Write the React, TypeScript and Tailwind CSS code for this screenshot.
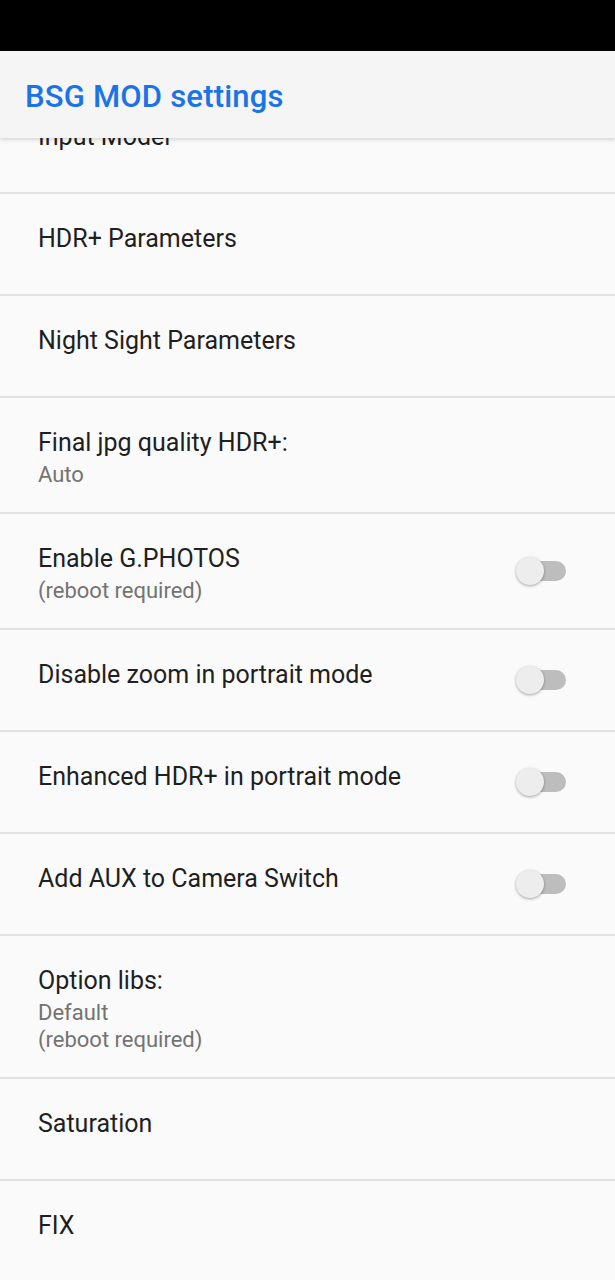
import type { ReactNode } from 'react'

type Pref = {
  title: string
  summary?: string[]
  toggle?: boolean
}

const prefs: Pref[] = [
  { title: 'Input Model' },
  { title: 'HDR+ Parameters' },
  { title: 'Night Sight Parameters' },
  { title: 'Final jpg quality HDR+:', summary: ['Auto'] },
  { title: 'Enable G.PHOTOS', summary: ['(reboot required)'], toggle: true },
  { title: 'Disable zoom in portrait mode', toggle: true },
  { title: 'Enhanced HDR+ in portrait mode', toggle: true },
  { title: 'Add AUX to Camera Switch', toggle: true },
  { title: 'Option libs:', summary: ['Default', '(reboot required)'] },
  { title: 'Saturation' },
  { title: 'FIX' },
]

function Switch() {
  return (
    <div className="relative flex h-[28px] w-[50px] items-center">
      <div className="ml-[2px] h-[20px] w-[48px] rounded-full bg-[#bdbdbd]" />
      <div className="absolute left-0 top-0 h-[28px] w-[28px] rounded-full bg-[#ededed] shadow-[0_1px_3px_rgba(0,0,0,0.35)]" />
    </div>
  )
}

function Row({ pref }: { pref: Pref }): ReactNode {
  return (
    <>
      <div className="flex min-h-[100px] items-center pl-[38px] pr-[49px]">
        <div className="flex-1 self-start pb-[24px] pt-[29px]">
          <div className="text-[25px] leading-[32px] text-[#1f1f1f]">{pref.title}</div>
          {pref.summary && (
            <div className="mt-[2px]">
              {pref.summary.map((s) => (
                <div key={s} className="text-[22px] leading-[27px] text-[#737373]">
                  {s}
                </div>
              ))}
            </div>
          )}
        </div>
        {pref.toggle && <Switch />}
      </div>
      <div className="h-[2px] bg-[#e3e3e3]" />
    </>
  )
}

export default function App() {
  return (
    <div
      className="flex h-[1280px] w-[615px] flex-col overflow-hidden bg-[#fafafa]"
      style={{ fontFamily: 'Roboto, "Noto Sans", sans-serif' }}
    >
      <div className="h-[51px] shrink-0 bg-black" />
      <div className="relative flex-1 overflow-hidden">
        <div className="absolute inset-x-0 top-0 z-10 flex h-[87px] items-center bg-[#f5f5f5] pl-[25px] shadow-[0_2px_4px_rgba(0,0,0,0.14)]">
          <h1 className="pt-[6px] text-[31px] font-medium tracking-[0.2px] text-[#1a73e8]">BSG MOD settings</h1>
        </div>
        <div className="pt-[41px]">
          {prefs.map((p) => (
            <Row key={p.title} pref={p} />
          ))}
        </div>
      </div>
    </div>
  )
}
